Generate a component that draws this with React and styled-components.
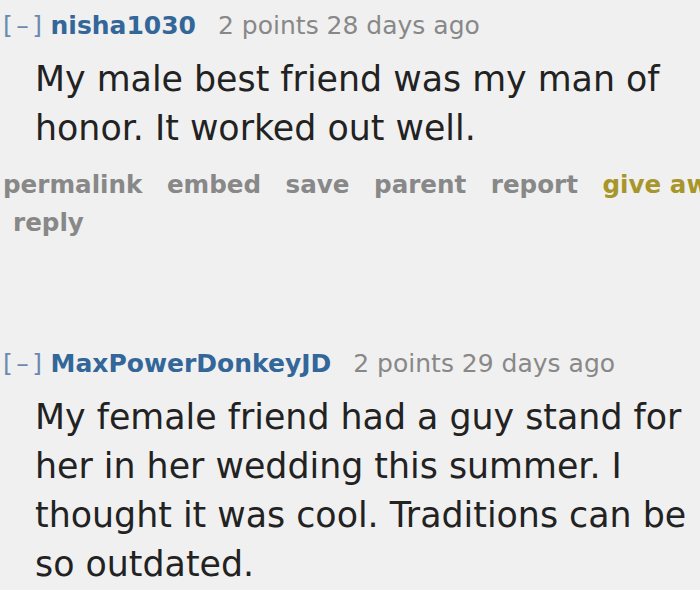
import React from 'react'
import styled, { createGlobalStyle } from 'styled-components'

const GlobalStyle = createGlobalStyle`
	html, body {
		margin: 0;
		padding: 0;
		background: #f0f0f0;
		overflow: hidden;
	}
	body {
		font-family: 'DejaVu Sans', Verdana, sans-serif;
	}
`

const Page = styled.main`
	width: 700px;
	height: 590px;
	overflow: hidden;
	padding-top: 11px;
	box-sizing: border-box;
`

const Comment = styled.section`
	margin-bottom: ${({ gap }) => gap || 0}px;
`

const Tagline = styled.div`
	display: flex;
	align-items: baseline;
	padding-left: 3px;
	font-size: 25px;
	line-height: 30px;
	white-space: nowrap;
`

const Expand = styled.span`
	color: #6a8ab3;
	letter-spacing: 3.5px;
	margin-right: 5px;
`

const Author = styled.span`
	color: #336699;
	font-weight: bold;
	margin-right: 22px;
`

const Score = styled.span`
	color: #888;
`

const Body = styled.div`
	margin-top: 14px;
	padding-left: 35px;
	width: 660px;
	font-size: 34.8px;
	line-height: 48.7px;
	color: #222;

	p {
		margin: 0;
	}
`

const Buttons = styled.ul`
	list-style: none;
	margin: 14px 0 0;
	padding: 0 0 0 3px;
	display: flex;
	flex-wrap: nowrap;
	white-space: nowrap;
	font-size: 24.6px;
	line-height: 38px;
	font-weight: bold;
`

const Button = styled.li`
	color: ${({ gold }) => (gold ? '#a8962a' : '#888')};
	margin-right: 24.5px;
`

const ReplyRow = styled(Buttons)`
	margin-top: 0;
	padding-left: 13px;
`

export default function App() {
	return (
		<Page>
			<GlobalStyle />
			<Comment gap={107}>
				<Tagline>
					<Expand>[–]</Expand>
					<Author>nisha1030</Author>
					<Score>2 points 28 days ago</Score>
				</Tagline>
				<Body>
					<p>My male best friend was my man of honor. It worked out well.</p>
				</Body>
				<Buttons>
					<Button>permalink</Button>
					<Button>embed</Button>
					<Button>save</Button>
					<Button>parent</Button>
					<Button>report</Button>
					<Button gold>give award</Button>
				</Buttons>
				<ReplyRow>
					<Button>reply</Button>
				</ReplyRow>
			</Comment>
			<Comment>
				<Tagline>
					<Expand>[–]</Expand>
					<Author>MaxPowerDonkeyJD</Author>
					<Score>2 points 29 days ago</Score>
				</Tagline>
				<Body>
					<p>
						My female friend had a guy stand for her in her wedding this
						summer. I thought it was cool. Traditions can be so outdated.
					</p>
				</Body>
			</Comment>
		</Page>
	)
}
